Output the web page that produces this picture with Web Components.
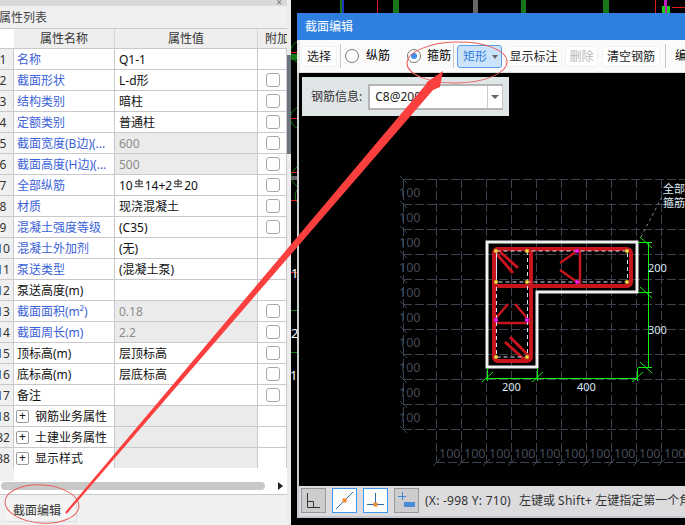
<!DOCTYPE html>
<html>
<head>
<meta charset="utf-8">
<style>
    html, body { margin: 0; height: 100%; background: #000; overflow: hidden; }
    body { font: 12px/16px "Noto Sans", "Noto Sans CJK SC", sans-serif; }
    .rebar { width: 10px; height: 9px; vertical-align: 2px; margin: 0 1px; }
</style>
</head>
<body>
<cad-desktop>
    <prop-panel>
        <prop-row n="1" label="名称" blue no-check>Q1-1</prop-row>
        <prop-row n="2" label="截面形状" blue>L-d形</prop-row>
        <prop-row n="3" label="结构类别" blue>暗柱</prop-row>
        <prop-row n="4" label="定额类别" blue>普通柱</prop-row>
        <prop-row n="5" label="截面宽度(B边)(..." blue off>600</prop-row>
        <prop-row n="6" label="截面高度(H边)(..." blue off>500</prop-row>
        <prop-row n="7" label="全部纵筋" blue>10<svg class="rebar" viewBox="0 0 10 10"><path d="M5 0v8M1.5 2.5h7v3h-7zM0 8.500h10" fill="none" stroke="#222"/></svg>14+2<svg class="rebar" viewBox="0 0 10 10"><path d="M5 0v8M1.5 2.5h7v3h-7zM0 8.500h10" fill="none" stroke="#222"/></svg>20</prop-row>
        <prop-row n="8" label="材质" blue>现浇混凝土</prop-row>
        <prop-row n="9" label="混凝土强度等级" blue>(C35)</prop-row>
        <prop-row n="10" label="混凝土外加剂" blue no-check>(无)</prop-row>
        <prop-row n="11" label="泵送类型" blue no-check>(混凝土泵)</prop-row>
        <prop-row n="12" label="泵送高度(m)" no-check></prop-row>
        <prop-row n="13" label="截面面积(m²)" blue off>0.18</prop-row>
        <prop-row n="14" label="截面周长(m)" blue off>2.2</prop-row>
        <prop-row n="15" label="顶标高(m)">层顶标高</prop-row>
        <prop-row n="16" label="底标高(m)">层底标高</prop-row>
        <prop-row n="17" label="备注"></prop-row>
        <prop-row n="18" label="钢筋业务属性" group no-check off></prop-row>
        <prop-row n="32" label="土建业务属性" group no-check off></prop-row>
        <prop-row n="38" label="显示样式" group no-check off></prop-row>
    </prop-panel>
    <section-window></section-window>
    <red-marks></red-marks>
</cad-desktop>

<script>
const UI_FONT = '"Noto Sans", "Noto Sans CJK SC", sans-serif';

class CadDesktop extends HTMLElement {
    constructor() {
        super();
        this.attachShadow({ mode: 'open' });
        this.shadowRoot.innerHTML = `
        <style>
            :host { display: flex; position: relative; width: 685px; height: 525px; overflow: hidden; background: #000; }
            svg { position: absolute; left: 0; top: 0; }
            text { font: 13px ${UI_FONT}; fill: #fff; }
        </style>
        <svg width="685" height="525" fill="none">
            <g stroke="#0b7a0b">
                <path d="M297 42a11 11 0 0 0 0 20M297 108a11 11 0 0 0 0 20M297 167a11 11 0 0 0 0 19M297 190a11 11 0 0 0 0 12"/>
                <path d="M291 310.500h6M291 352.500h6" />
            </g>
            <g fill="#17761a"><rect x="291" y="54" width="6" height="6"/><rect x="393" y="0" width="6" height="13"/><rect x="521" y="0" width="5" height="13"/><rect x="603" y="0" width="6" height="13"/></g>
            <rect x="473" y="0" width="5" height="13" fill="#666"/>
            <rect x="291" y="176" width="6" height="4" fill="#666"/>
            <g stroke="#e01818">
                <path d="M291 52.500h6M291 118.500h6M291 172.500h6M291 200.500h6M291 272.500h6M377.500 0v13M343 0v13M655.500 0v13M672 7.500h13" />
            </g>
            <rect x="340" y="0" width="2" height="13" fill="#17761a"/>
            <rect x="342" y="0" width="2" height="13" fill="#2030c0"/>
            <rect x="664" y="0" width="3" height="13" fill="#c020c0"/>
            <rect x="662" y="6" width="3" height="7" fill="#10d010"/>
            <rect x="667" y="6" width="3" height="7" fill="#10d010"/>
            <text x="291" y="278">1</text>
            <text x="291" y="338">2</text>
            <text x="290" y="380">16</text>
        </svg>
        <slot></slot>`;
    }
}

class PropPanel extends HTMLElement {
    constructor() {
        super();
        this.attachShadow({ mode: 'open' });
        this.shadowRoot.innerHTML = `
        <style>
            :host { display: flex; position: relative; flex: none; width: 291px; height: 525px; color: #222; }
            .main { display: flex; flex-direction: column; flex: none; width: 287px; background: #f0f0f0; overflow: hidden; }
            .split { flex: 1; background: #ececec; padding-top: 55px; }
            .split i { display: block; height: 99px; background: #6b7680; }
            .top { flex: none; height: 6px; background: #d9d9d9; display: flex; justify-content: flex-end; padding-right: 5px; }
            .top span { font-size: 10px; line-height: 5px; color: #777; }
            .title { flex: none; height: 22px; line-height: 24px; margin-left: -1px; color: #444; border-bottom: 1px solid #c9c9cc; }
            .head { flex: none; display: grid; grid-template-columns: 14px 101px 143px 29px; height: 19px; line-height: 20px; text-align: center; color: #333; overflow: hidden; }
            .head div { background: #eeeeee; border-right: 1px solid #d4d4d6; white-space: nowrap; overflow: hidden; }
            .head div:first-child { background: #fff; border: 0; }
            .head div:last-child { text-align: left; padding-left: 7px; border: 0; }
            .body { flex: none; background: #fff; height: 419px; display: flex; flex-direction: column; border-top: 1px solid #c9c9cc; }
            .rest { flex: none; height: 13px; background: #fff; }
            .rest i { display: block; width: 14px; height: 13px; background: #f0f0f0; }
            .hscroll { flex: none; height: 13px; background: #fff; border-bottom: 1px solid #c9c9cc; display: flex; align-items: flex-start; }
            .thumb { width: 264px; height: 8px; margin: 1px 0 0 1px; border-radius: 4px; background: #c8c8c8; }
            .tri { margin: 1px 0 0 13px; width: 0; height: 0; border: 4px solid transparent; border-left: 5px solid #222; border-right: 0; }
            .foot { flex: 1; padding: 4px 0 0 5px; }
            .btn { display: block; width: 72px; height: 23px; line-height: 24px; box-sizing: border-box; padding-left: 8px; background: #f4f4f4; border: 1px solid #d8dde6; border-top: 0; border-left: 0; border-radius: 0 0 3px 3px; color: #333; }
        </style>
        <div class="main">
            <div class="top"><span>×</span></div>
            <div class="title">属性列表</div>
            <div class="head"><div></div><div>属性名称</div><div>属性值</div><div>附加</div></div>
            <div class="body"><slot></slot></div>
            <div class="rest"><i></i></div>
            <div class="hscroll"><div class="thumb"></div><div class="tri"></div></div>
            <div class="foot"><span class="btn">截面编辑</span></div>
        </div>
        <div class="split"><i></i></div>`;
    }
}

class PropRow extends HTMLElement {
    constructor() {
        super();
        this.template = document.createElement('template');
        this.template.innerHTML = `
        <style>
            :host { display: grid; grid-template-columns: 14px 101px 143px 29px; height: 21px; box-sizing: border-box; line-height: 20px; border-bottom: 1px solid #c9c9cc; color: #111; background: #fff; flex: none; }
            div { border-right: 1px solid #c9c9cc; box-sizing: border-box; white-space: nowrap; overflow: hidden; }
            .no { background: #f0f0f0; display: flex; justify-content: center; padding: 1px 7px 0 0; color: #333; }
            .name { padding: 1px 0 0 3px; display: flex; align-items: center; }
            :host([blue]) .name { color: #3b62d8; }
            .value { padding: 1px 0 0 4px; }
            :host([off]) .value { background: #ebebeb; color: #8c8c8c; }
            .check { display: flex; align-items: center; justify-content: center; padding-left: 2px; }
            .check i { width: 14px; height: 14px; box-sizing: border-box; border: 1px solid #a8a8a8; border-radius: 3px; background: #fff; }
            :host([no-check]) .check i { display: none; }
            .plus { display: none; width: 13px; height: 13px; margin: 0 6px 0 -1px; box-sizing: border-box; border: 1px solid #999; border-radius: 2px; line-height: 10px; text-align: center; color: #111; }
            :host([group]) .plus { display: block; }
        </style>
        <div class="no"><span></span></div>
        <div class="name"><span class="plus">+</span><span class="label"></span></div>
        <div class="value"><slot></slot></div>
        <div class="check"><i></i></div>`;
        this.attachShadow({ mode: 'open' });
        this.shadowRoot.appendChild(this.template.content.cloneNode(true));
    }
    connectedCallback() {
        this.shadowRoot.querySelector('.no span').textContent = this.getAttribute('n');
        this.shadowRoot.querySelector('.label').textContent = this.getAttribute('label');
    }
}

class ToolBtn extends HTMLElement {
    constructor() {
        super();
        this.attachShadow({ mode: 'open' });
        this.shadowRoot.innerHTML = `
        <style>
            :host { display: block; flex: none; height: 21px; line-height: 20px; box-sizing: border-box; background: #fff; border: 1px solid #f2f2f2; border-radius: 3px; color: #222; text-align: center; }
            :host([disabled]) { color: #b9b9b9; }
            :host([active]) { height: 23px; line-height: 21px; background: #cce4fb; border-color: #5a9ee8; color: #2e7fe0; text-align: left; padding-left: 5px; position: relative; }
            i { display: none; position: absolute; right: 3px; top: 9px; border: 3px solid transparent; border-top: 4px solid #666; border-bottom: 0; }
            :host([active]) i { display: block; }
        </style>
        <slot></slot><i></i>`;
    }
}

class RadioMark extends HTMLElement {
    constructor() {
        super();
        this.attachShadow({ mode: 'open' });
        this.shadowRoot.innerHTML = `
        <style>
            :host { display: flex; align-items: center; justify-content: center; flex: none; width: 14px; height: 14px; box-sizing: border-box; border: 1px solid #777; border-radius: 50%; background: #fff; }
            i { display: none; width: 6px; height: 6px; border-radius: 50%; background: #3f8ef0; }
            :host([checked]) i { display: block; }
        </style>
        <i></i>`;
    }
}

class SectionWindow extends HTMLElement {
    constructor() {
        super();
        this.attachShadow({ mode: 'open' });
        this.shadowRoot.innerHTML = `
        <style>
            :host { display: flex; flex-direction: column; position: absolute; left: 297px; top: 13px; width: 388px; height: 505px; overflow: hidden; }
            .title { flex: none; height: 27px; line-height: 28px; background: #2e7fe0; color: #fff; padding-left: 8px; }
            .tools { flex: none; height: 33px; box-sizing: border-box; display: flex; align-items: center; background: #fbfbfb; border-left: 3px solid #e6e6e6; border-bottom: 1px solid #dcdcdc; white-space: nowrap; padding-left: 1px; }
            .sep { flex: none; width: 1px; height: 24px; background: #c8c8c8; }
            drawing-canvas { flex: 1; }
        </style>
        <div class="title">截面编辑</div>
        <div class="tools">
            <tool-btn style="width:36px">选择</tool-btn>
            <span class="sep" style="margin:0 4px 0 3px"></span>
            <radio-mark></radio-mark>
            <span style="margin:0 17px 0 7px">纵筋</span>
            <radio-mark checked></radio-mark>
            <span style="margin:0 2px 0 6px">箍筋</span>
            <span class="sep" style="margin-right:3px"></span>
            <tool-btn active style="width:45px">矩形</tool-btn>
            <tool-btn style="width:57px;margin-left:3px">显示标注</tool-btn>
            <tool-btn disabled style="width:33px;margin-left:3px">删除</tool-btn>
            <tool-btn style="width:58px;margin-left:4px">清空钢筋</tool-btn>
            <span class="sep" style="margin:0 9px 0 5px"></span>
            <span>编辑</span>
        </div>
        <drawing-canvas></drawing-canvas>
        <status-bar></status-bar>`;
    }
}

class DrawingCanvas extends HTMLElement {
    constructor() {
        super();
        this.attachShadow({ mode: 'open' });
        let grid = '', labels = '';
        for (let y = 179; y <= 429; y += 25) grid += `<path d="M403 ${y + .5}H685"/><path class="tick" d="M400 ${y - 3}l7 7"/>`;
        grid += `<path d="M436 462.500H685"/>`;
        grid += `<path d="M403.500 179V429"/>`;
        for (let x = 436; x <= 685; x += 25) {
            grid += `<path d="M${x + .5} 179V462"/><path class="tick" d="M${x - 3} 466l7 -7"/>`;
            labels += `<text x="${x + 3}" y="458">100</text>`;
        }
        for (let y = 197; y <= 422; y += 25) labels += `<text x="399" y="${y}">100</text>`;

        const dots = [[496,251],[527,251],[627,251],[496,282],[527,282],[627,282],[496,357],[527,357]]
            .map(([x, y]) => `<circle cx="${x}" cy="${y}" r="2" fill="#f4e04a" stroke="#a86a10" stroke-width=".6"/>`).join('');
        const ties = [[577,251],[577,282],[496,320],[527,320]]
            .map(([x, y]) => `<circle cx="${x}" cy="${y}" r="2" fill="#ff20ff" stroke="#a0109a" stroke-width=".6"/>`).join('');

        this.shadowRoot.innerHTML = `
        <style>
            :host { display: block; position: relative; background: #000; border-left: 2px solid #c8ccd0; overflow: hidden; }
            svg { position: absolute; left: 0; top: 0; }
            .grid path { stroke: #3b4250; stroke-dasharray: 9 3; fill: none; }
            .grid path.tick { stroke-dasharray: none; }
            .labels text { font: 12.5px ${UI_FONT}; fill: #454b58; }
            .dim text { font: 11px ${UI_FONT}; fill: #dce8f4; }
            .info { position: absolute; left: 3px; top: 4px; width: 207px; height: 39px; box-sizing: border-box; display: flex; align-items: center; padding-left: 9px; background: #e0e6e8; color: #333; }
            .select { position: relative; width: 135px; height: 26px; margin-left: 6px; box-sizing: border-box; border: 2px solid #b5b5b5; border-right: 1px solid #c8c8c8; background: #fff; line-height: 22px; padding-left: 5px; color: #222; }
            .select b { position: absolute; right: 0; top: 0; bottom: 0; width: 14px; border-left: 1px solid #ccc; background: #fff; }
            .select b::after { content: ""; position: absolute; left: 3px; top: 9px; border: 4px solid transparent; border-top: 4px solid #666; border-bottom: 0; }
        </style>
        <svg width="386" height="413" viewBox="299 73 386 413" fill="none">
            <g class="grid">${grid}</g>
            <g class="labels">${labels}</g>
            <path d="M487 242H637V292H537V367H487Z" stroke="#f0f0f0" stroke-width="3"/>
            <g stroke="#c8141c" stroke-width="4" stroke-linejoin="round">
                <rect x="494" y="249" width="137" height="37" rx="4"/>
                <rect x="494" y="249" width="37" height="112" rx="4"/>
                <path d="M580 249V286M494 323H531" stroke-width="2.5"/>
                <path d="M495 252L513 273M498 250L518 268M505 342L525 360M510 337L530 357" stroke-width="3"/>
                <path d="M577 251L560 263M577 282L560 270M496 318L508 304M527 318L515 304" stroke-width="2.5"/>
            </g>
            <path d="M496.500 251H627.500V282H496.500ZM527.500 251V357H496.500V251" stroke="#d4e4f4" stroke-dasharray="4 3"/>
            ${dots}${ties}
            <g class="dim">
                <g stroke="#10f010">
                    <path d="M486 378.500H638M487.500 368V381M537.500 368V381M637.500 368V381"/>
                    <path d="M482 382L493 372M532 382L543 372M632 382L643 372"/>
                    <path d="M648.500 242V368M638 242.500H652M638 292.500H652M638 367.500H652"/>
                    <path d="M640 237L652 248M640 287L652 298M640 362L652 373"/>
                </g>
                <path d="M641 237L664 193" stroke="#888" stroke-dasharray="3 3"/>
                <text x="502" y="391">200</text>
                <text x="577" y="391">400</text>
                <text x="648" y="272">200</text>
                <text x="648" y="334">300</text>
                <text x="663" y="193">全部</text>
                <text x="663" y="207">箍筋</text>
            </g>
        </svg>
        <div class="info">钢筋信息:<div class="select">C8@200<b></b></div></div>`;
    }
}

class StatusBar extends HTMLElement {
    constructor() {
        super();
        this.attachShadow({ mode: 'open' });
        this.shadowRoot.innerHTML = `
        <style>
            :host { display: flex; flex: none; align-items: center; height: 32px; box-sizing: border-box; padding: 0 0 1px 2px; gap: 6px; background: #dcdcdf; border-left: 2px solid #c8ccd0; border-bottom: 2px solid #c4c8d0; white-space: nowrap; color: #333; }
            .ic { flex: none; width: 25px; height: 25px; box-sizing: border-box; border: 1px solid #999; background: #cdcdcf; }
            .ic.on { border-color: #3f97f0; background: #fff; }
            svg { display: block; }
            .msg { padding-top: 1px; }
            .xy { letter-spacing: .25px; margin-right: 8px; }
            .en { letter-spacing: .3px; }
        </style>
        <div class="ic"><svg width="23" height="23" fill="none" stroke="#333"><path d="M5.500 4V18.500H18M5.500 12.500H11.500V18.500"/></svg></div>
        <div class="ic on"><svg width="23" height="23" fill="none"><path d="M3 20L20 3" stroke="#3566a8"/><rect x="9.500" y="9.500" width="4" height="4" fill="#ef8a2c"/></svg></div>
        <div class="ic on"><svg width="23" height="23" fill="none"><path d="M3 15.500H20M11.500 4V15" stroke="#3566a8"/><rect x="9.500" y="13.500" width="4" height="4" fill="#ef8a2c"/></svg></div>
        <div class="ic"><svg width="23" height="23" fill="none"><path d="M3 7.500H11M7.500 3V11" stroke="#3f8ad8"/><rect x="9" y="13" width="11" height="5" fill="#4a8cd8"/></svg></div>
        <span class="msg"><span class="xy">(X: -998 Y: 710)</span>左键或 <span class="en">Shift+</span> 左键指定第一个角点</span>`;
    }
}

class RedMarks extends HTMLElement {
    constructor() {
        super();
        this.attachShadow({ mode: 'open' });
        this.shadowRoot.innerHTML = `
        <style>
            :host { display: block; position: absolute; left: 0; top: 0; pointer-events: none; }
            svg { display: block; }
        </style>
        <svg width="685" height="525" fill="none">
            <ellipse cx="42" cy="504" rx="37" ry="19" stroke="#e8605c" transform="rotate(4 42 504)"/>
            <ellipse cx="457" cy="62.500" rx="50" ry="20.500" stroke="#e8605c" transform="rotate(-1 457 62)"/>
            <path d="M443 71L440 87L433 90L66.800 513.700L65.200 512.300L425.800 84.500L427 82Z" fill="#fb3f3f"/>
        </svg>`;
    }
}

customElements.define('cad-desktop', CadDesktop);
customElements.define('prop-panel', PropPanel);
customElements.define('prop-row', PropRow);
customElements.define('tool-btn', ToolBtn);
customElements.define('radio-mark', RadioMark);
customElements.define('section-window', SectionWindow);
customElements.define('drawing-canvas', DrawingCanvas);
customElements.define('status-bar', StatusBar);
customElements.define('red-marks', RedMarks);
</script>
</body>
</html>
